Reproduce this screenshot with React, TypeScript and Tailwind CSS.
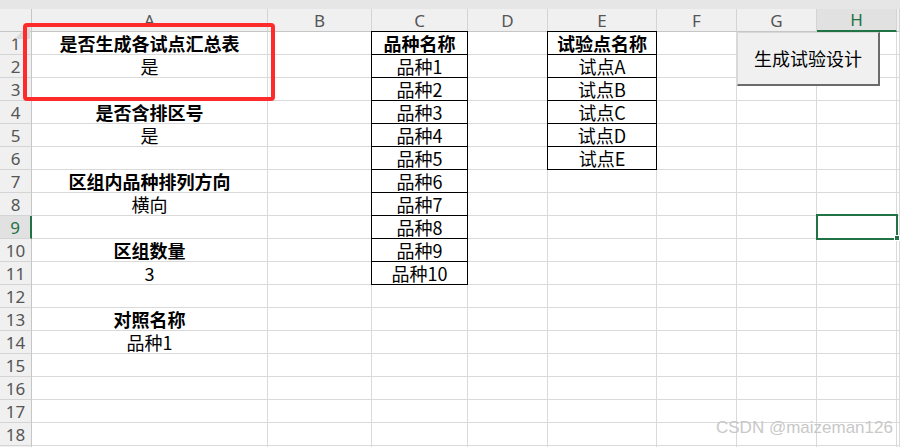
import React from "react";

type Cell = { text: string; bold?: boolean };

const COLS = ["A", "B", "C", "D", "E", "F", "G", "H", ""];
const ROW_COUNT = 19;
const CJK = "font-['Noto_Sans_CJK_SC','Noto_Sans',sans-serif]";

const colA: Record<number, Cell> = {
    1: { text: "是否生成各试点汇总表", bold: true },
    2: { text: "是" },
    4: { text: "是否含排区号", bold: true },
    5: { text: "是" },
    7: { text: "区组内品种排列方向", bold: true },
    8: { text: "横向" },
    10: { text: "区组数量", bold: true },
    11: { text: "3" },
    13: { text: "对照名称", bold: true },
    14: { text: "品种1" },
};

function getCell(row: number, col: string): Cell | undefined {
    if (col === "A") return colA[row];
    if (col === "C") {
        if (row === 1) return { text: "品种名称", bold: true };
        if (row <= 11) return { text: `品种${row - 1}` };
    }
    if (col === "E") {
        if (row === 1) return { text: "试验点名称", bold: true };
        if (row <= 6) return { text: `试点${"ABCDE"[row - 2]}` };
    }
    return undefined;
}

function isBoxed(row: number, col: string) {
    return (col === "C" && row <= 11) || (col === "E" && row <= 6);
}

function HeaderRow() {
    return (
        <div className="grid grid-cols-[32px_236px_104px_96px_80px_109px_80px_80px_80px_1fr] h-[23px] bg-[#f0f0f0]">
            {/* corner */}
            <div className="relative border-r border-b border-[#c6c6c6]">
                <svg className="absolute left-[15px] top-[13px]" width="15" height="17" viewBox="0 0 15 17">
                    <polygon points="15,0 15,17 0,17" fill="#dadada" />
                </svg>
            </div>
            {COLS.map((c, i) => {
                const selected = c === "H";
                return (
                    <div
                        key={i}
                        className={`flex items-center justify-center text-[17px] leading-none font-['Noto_Sans',sans-serif] border-r ${
                            selected
                                ? "bg-[#e1e1e1] text-[#217346] border-b-2 border-b-[#217346] border-r-[#d4d4d4]"
                                : "text-[#555] border-b border-b-[#c6c6c6] border-r-[#d4d4d4]"
                        }`}
                    >
                        {c}
                    </div>
                );
            })}
        </div>
    );
}

function SheetRow({ row }: { row: number }) {
    const selected = row === 9;
    return (
        <div className="grid grid-cols-[32px_236px_104px_96px_80px_109px_80px_80px_80px_1fr] h-[23px]">
            <div
                className={`flex items-center justify-center text-[17px] leading-none font-['Noto_Sans',sans-serif] border-b border-b-[#d4d4d4] ${
                    selected
                        ? "bg-[#e1e1e1] text-[#217346] border-r-2 border-r-[#217346]"
                        : "bg-[#f0f0f0] text-[#555] border-r border-r-[#c6c6c6]"
                }`}
            >
                {row}
            </div>
            {COLS.map((c, i) => {
                const cell = getCell(row, c);
                const boxed = isBoxed(row, c);
                const shadow = boxed
                    ? row === 1
                        ? "shadow-[-1px_0_0_#000,0_-1px_0_#000,-1px_-1px_0_#000]"
                        : "shadow-[-1px_0_0_#000]"
                    : "";
                return (
                    <div
                        key={i}
                        className={`flex items-center justify-center border-r border-b text-[18px] leading-none text-black whitespace-nowrap ${CJK} ${
                            boxed ? "border-black" : "border-[#dadada]"
                        } ${shadow} ${cell?.bold ? "font-bold" : ""}`}
                    >
                        {cell?.text}
                    </div>
                );
            })}
        </div>
    );
}

export default function App() {
    const rows = Array.from({ length: ROW_COUNT }, (_, i) => i + 1);
    return (
        <div className="relative w-[900px] h-[447px] overflow-hidden bg-white">
            <div className="h-[9px] bg-[#e6e6e6]" />
            <HeaderRow />
            {rows.map((r) => (
                <SheetRow key={r} row={r} />
            ))}

            {/* selected cell H9 */}
            <div className="absolute left-[816px] top-[214px] w-[82px] h-[26px] border-2 border-[#217346]" />
            <div className="absolute left-[894px] top-[235px] w-[6px] h-[6px] bg-[#217346] border border-white" />

            {/* form button */}
            <div
                className={`absolute left-[737px] top-[32px] w-[143px] h-[54px] flex items-center justify-center bg-[#f0f0f0] border-t border-l border-t-[#d8d8d8] border-l-[#d8d8d8] border-r-2 border-b-2 border-r-[#6b6b6b] border-b-[#6b6b6b] text-[18px] text-black ${CJK}`}
            >
                生成试验设计
            </div>

            {/* annotation */}
            <div className="absolute left-[23px] top-[23px] w-[252px] h-[78px] border-4 border-[#ff2b2b] rounded-[4px]" />

            {/* watermark */}
            <div className="absolute left-[716px] top-[419px] text-[17px] leading-none text-[#c8c8c8] font-['Liberation_Sans',sans-serif] whitespace-nowrap">
                CSDN @maizeman126
            </div>
        </div>
    );
}
